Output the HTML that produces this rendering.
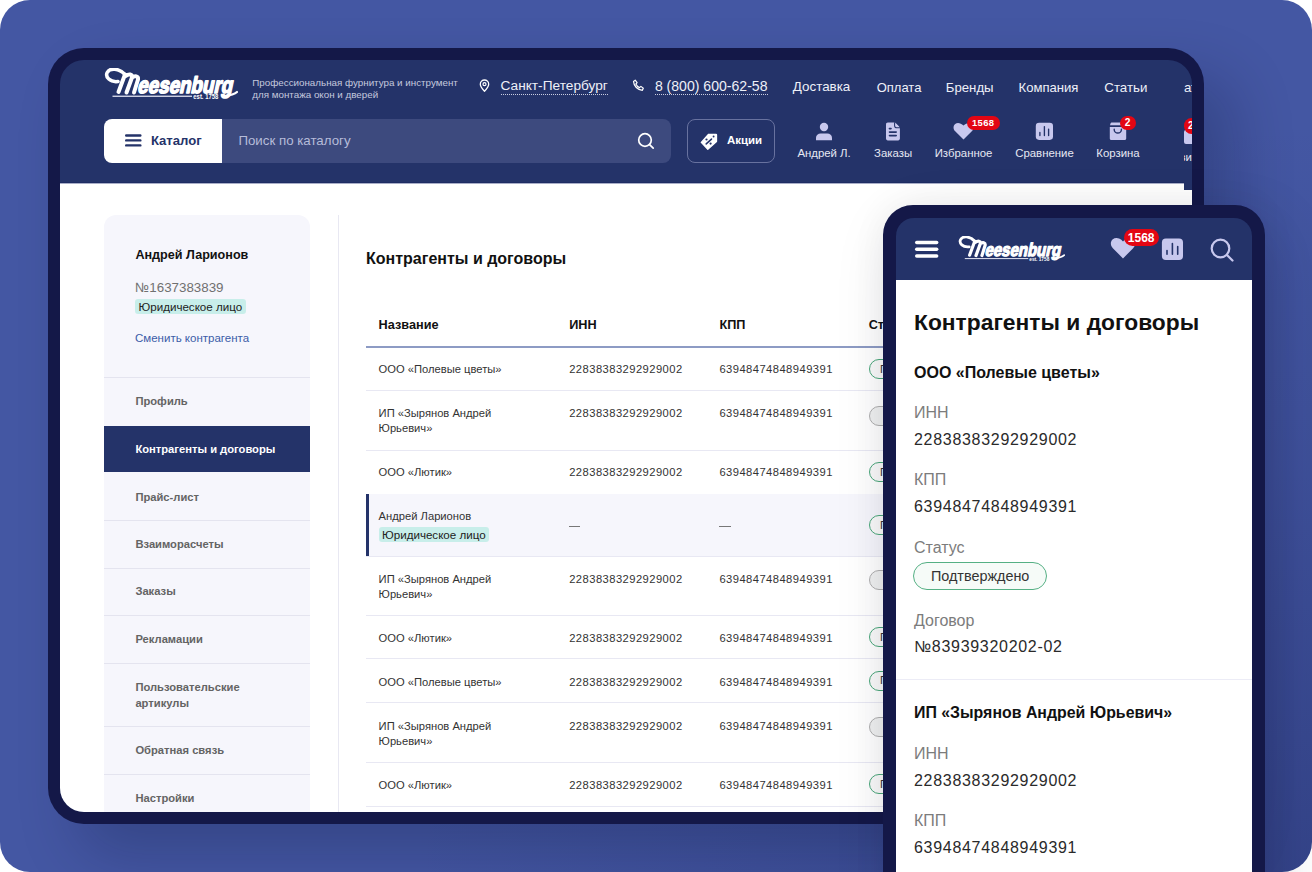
<!DOCTYPE html>
<html><head><meta charset="utf-8">
<style>
*{box-sizing:border-box;margin:0;padding:0}
html,body{width:1312px;height:872px;overflow:hidden;background:#fff;font-family:"Liberation Sans",sans-serif}
.abs{position:absolute}
.t{position:absolute;white-space:nowrap;line-height:1}
#bg{position:absolute;left:0;top:0;width:1312px;height:872px;border-radius:30px;background:radial-gradient(ellipse 900px 750px at 100% 100%,rgba(30,40,100,0.40) 0%,rgba(30,40,100,0.15) 55%,rgba(30,40,100,0) 100%),#4457a3}
#dframe{position:absolute;left:48px;top:48px;width:1156px;height:776px;border-radius:36px;background:#141848;box-shadow:30px 30px 60px rgba(5,10,40,0.22)}
#dclip{position:absolute;left:60px;top:60px;width:1132px;height:752px;border-radius:24px;overflow:hidden;background:#243369}
#dclip>.inner{position:absolute;left:-60px;top:-60px;width:1312px;height:872px}
#hclip{position:absolute;left:60px;top:60px;width:1124px;height:123px;overflow:hidden}
#hclip>.inner{position:absolute;left:-60px;top:-60px;width:1312px;height:872px}
#mframe{position:absolute;left:883px;top:205px;width:382px;height:720px;border-radius:30px;background:#141848;box-shadow:12px 20px 60px rgba(5,10,40,0.15),0 0 36px rgba(0,0,20,0.05)}
#mclip{position:absolute;left:896px;top:218px;width:356px;height:700px;border-radius:18px 18px 0 0;overflow:hidden;background:#243369}
#mclip>.inner{position:absolute;left:-896px;top:-218px;width:1312px;height:872px}
</style></head><body>
<div id="bg"></div>
<div id="dframe"></div>
<div id="dclip"><div class="inner">
<div class="abs" style="left:60px;top:183px;width:1124px;height:640px;background:#fff"></div><div class="abs" style="left:60px;top:182px;width:1124px;height:1px;background:#1e2d63"></div><div class="abs" style="left:60px;top:183px;width:1124px;height:1px;background:#a9aec8"></div><div class="abs" style="left:1184px;top:190px;width:8px;height:640px;background:#fff"></div>

<div class="abs" style="left:104px;top:215px;width:206.00px;height:615.00px;background:#f6f6fc;border-radius:12px 12px 0 0"></div>
<div class="t" style="left:135.40px;top:248.73px;font-size:12.6px;font-weight:700;color:#111;">Андрей Ларионов</div>
<div class="t" style="left:135.00px;top:280.70px;font-size:13.35px;font-weight:400;color:#707070;">№1637383839</div>
<div class="abs" style="left:135px;top:299.3px;width:110.80px;height:15.20px;background:#c8eeea;border-radius:3px"></div>
<div class="t" style="left:138.50px;top:301.08px;font-size:11.6px;font-weight:400;color:#222;">Юридическое лицо</div>
<div class="t" style="left:135.00px;top:332.97px;font-size:11.5px;font-weight:400;color:#3b5ca8;">Сменить контрагента</div>
<div class="abs" style="left:104px;top:377.0px;width:206.00px;height:1.00px;background:#e4e4ef"></div>
<div class="abs" style="left:104px;top:519.5px;width:206.00px;height:1.00px;background:#e4e4ef"></div>
<div class="abs" style="left:104px;top:568.0px;width:206.00px;height:1.00px;background:#e4e4ef"></div>
<div class="abs" style="left:104px;top:614.8px;width:206.00px;height:1.00px;background:#e4e4ef"></div>
<div class="abs" style="left:104px;top:662.7px;width:206.00px;height:1.00px;background:#e4e4ef"></div>
<div class="abs" style="left:104px;top:725.9px;width:206.00px;height:1.00px;background:#e4e4ef"></div>
<div class="abs" style="left:104px;top:773.5px;width:206.00px;height:1.00px;background:#e4e4ef"></div>
<div class="abs" style="left:104px;top:425.6px;width:206.00px;height:46.90px;background:#243369"></div>
<div class="t" style="left:135.40px;top:443.82px;font-size:11.2px;font-weight:700;color:#fff;">Контрагенты и договоры</div>
<div class="t" style="left:135.40px;top:396.32px;font-size:11.2px;font-weight:700;color:#646464;">Профиль</div>
<div class="t" style="left:135.40px;top:491.92px;font-size:11.2px;font-weight:700;color:#646464;">Прайс-лист</div>
<div class="t" style="left:135.40px;top:538.82px;font-size:11.2px;font-weight:700;color:#646464;">Взаиморасчеты</div>
<div class="t" style="left:135.40px;top:586.42px;font-size:11.2px;font-weight:700;color:#646464;">Заказы</div>
<div class="t" style="left:135.40px;top:633.92px;font-size:11.2px;font-weight:700;color:#646464;">Рекламации</div>
<div class="t" style="left:135.40px;top:681.82px;font-size:11.2px;font-weight:700;color:#646464;">Пользовательские</div>
<div class="t" style="left:135.40px;top:697.52px;font-size:11.2px;font-weight:700;color:#646464;">артикулы</div>
<div class="t" style="left:135.40px;top:745.02px;font-size:11.2px;font-weight:700;color:#646464;">Обратная связь</div>
<div class="t" style="left:135.40px;top:792.62px;font-size:11.2px;font-weight:700;color:#646464;">Настройки</div>
<div class="abs" style="left:338px;top:215px;width:1.00px;height:615.00px;background:#e8e8f2"></div>
<div class="t" style="left:366.00px;top:250.76px;font-size:16px;font-weight:700;color:#111;">Контрагенты и договоры</div>
<div class="t" style="left:378.60px;top:319.25px;font-size:12.7px;font-weight:700;color:#111;">Название</div>
<div class="t" style="left:569.20px;top:319.25px;font-size:12.7px;font-weight:700;color:#111;">ИНН</div>
<div class="t" style="left:719.40px;top:319.25px;font-size:12.7px;font-weight:700;color:#111;">КПП</div>
<div class="t" style="left:868.70px;top:319.25px;font-size:12.7px;font-weight:700;color:#111;">Статус</div>
<div class="abs" style="left:366px;top:346.3px;width:534.00px;height:1.50px;background:#8d9bc4"></div>
<div class="t" style="left:378.60px;top:364.12px;font-size:11.2px;font-weight:400;color:#333;">ООО «Полевые цветы»</div>
<div class="t" style="left:569.20px;top:364.12px;font-size:11.2px;font-weight:400;color:#333;letter-spacing:0.45px;">22838383292929002</div>
<div class="t" style="left:719.40px;top:364.12px;font-size:11.2px;font-weight:400;color:#333;letter-spacing:0.45px;">63948474848949391</div>
<div class="abs" style="left:366px;top:390.0px;width:534.00px;height:1.00px;background:#e8e8f3"></div>
<div class="abs" style="left:868.7px;top:359px;width:91.30px;height:20.00px;border:1px solid #4aa87a;border-radius:10px;background:#fafafa"></div>
<div class="t" style="left:880.00px;top:363.52px;font-size:11.2px;font-weight:400;color:#333;">Подтверждено</div>
<div class="t" style="left:378.60px;top:408.02px;font-size:11.2px;font-weight:400;color:#333;">ИП «Зырянов Андрей</div>
<div class="t" style="left:378.60px;top:423.12px;font-size:11.2px;font-weight:400;color:#333;">Юрьевич»</div>
<div class="t" style="left:569.20px;top:408.02px;font-size:11.2px;font-weight:400;color:#333;letter-spacing:0.45px;">22838383292929002</div>
<div class="t" style="left:719.40px;top:408.02px;font-size:11.2px;font-weight:400;color:#333;letter-spacing:0.45px;">63948474848949391</div>
<div class="abs" style="left:366px;top:450.2px;width:534.00px;height:1.00px;background:#e8e8f3"></div>
<div class="abs" style="left:868.7px;top:405.5px;width:91.30px;height:20.00px;border:1px solid #b0b0b0;border-radius:10px;background:#f0f1f1"></div>
<div class="t" style="left:378.60px;top:467.02px;font-size:11.2px;font-weight:400;color:#333;">ООО «Лютик»</div>
<div class="t" style="left:569.20px;top:467.02px;font-size:11.2px;font-weight:400;color:#333;letter-spacing:0.45px;">22838383292929002</div>
<div class="t" style="left:719.40px;top:467.02px;font-size:11.2px;font-weight:400;color:#333;letter-spacing:0.45px;">63948474848949391</div>
<div class="abs" style="left:366px;top:493.5px;width:534.00px;height:1.00px;background:#e8e8f3"></div>
<div class="abs" style="left:868.7px;top:462px;width:91.30px;height:20.00px;border:1px solid #4aa87a;border-radius:10px;background:#fafafa"></div>
<div class="t" style="left:880.00px;top:466.52px;font-size:11.2px;font-weight:400;color:#333;">Подтверждено</div>
<div class="abs" style="left:366px;top:494px;width:534.00px;height:62.00px;background:#f6f6fc"></div>
<div class="abs" style="left:366px;top:494px;width:3.00px;height:62.00px;background:#243369"></div>
<div class="t" style="left:378.60px;top:510.52px;font-size:11.2px;font-weight:400;color:#333;">Андрей Ларионов</div>
<div class="abs" style="left:378.5px;top:527.2px;width:110.30px;height:15.10px;background:#c8eeea;border-radius:3px"></div>
<div class="t" style="left:382.00px;top:528.98px;font-size:11.6px;font-weight:400;color:#222;">Юридическое лицо</div>
<div class="abs" style="left:569.2px;top:525.5px;width:11.30px;height:1.10px;background:#777"></div>
<div class="abs" style="left:719.4px;top:525.5px;width:11.30px;height:1.10px;background:#777"></div>
<div class="abs" style="left:366px;top:555.5px;width:534.00px;height:1.00px;background:#e8e8f3"></div>
<div class="abs" style="left:868.7px;top:515px;width:91.30px;height:20.00px;border:1px solid #4aa87a;border-radius:10px;background:#fafafa"></div>
<div class="t" style="left:880.00px;top:519.52px;font-size:11.2px;font-weight:400;color:#333;">Подтверждено</div>
<div class="t" style="left:378.60px;top:574.02px;font-size:11.2px;font-weight:400;color:#333;">ИП «Зырянов Андрей</div>
<div class="t" style="left:378.60px;top:589.22px;font-size:11.2px;font-weight:400;color:#333;">Юрьевич»</div>
<div class="t" style="left:569.20px;top:574.02px;font-size:11.2px;font-weight:400;color:#333;letter-spacing:0.45px;">22838383292929002</div>
<div class="t" style="left:719.40px;top:574.02px;font-size:11.2px;font-weight:400;color:#333;letter-spacing:0.45px;">63948474848949391</div>
<div class="abs" style="left:366px;top:614.8px;width:534.00px;height:1.00px;background:#e8e8f3"></div>
<div class="abs" style="left:868.7px;top:570px;width:91.30px;height:20.00px;border:1px solid #b0b0b0;border-radius:10px;background:#f0f1f1"></div>
<div class="t" style="left:378.60px;top:633.02px;font-size:11.2px;font-weight:400;color:#333;">ООО «Лютик»</div>
<div class="t" style="left:569.20px;top:633.02px;font-size:11.2px;font-weight:400;color:#333;letter-spacing:0.45px;">22838383292929002</div>
<div class="t" style="left:719.40px;top:633.02px;font-size:11.2px;font-weight:400;color:#333;letter-spacing:0.45px;">63948474848949391</div>
<div class="abs" style="left:366px;top:658.3px;width:534.00px;height:1.00px;background:#e8e8f3"></div>
<div class="abs" style="left:868.7px;top:627px;width:91.30px;height:20.00px;border:1px solid #4aa87a;border-radius:10px;background:#fafafa"></div>
<div class="t" style="left:880.00px;top:631.52px;font-size:11.2px;font-weight:400;color:#333;">Подтверждено</div>
<div class="t" style="left:378.60px;top:676.82px;font-size:11.2px;font-weight:400;color:#333;">ООО «Полевые цветы»</div>
<div class="t" style="left:569.20px;top:676.82px;font-size:11.2px;font-weight:400;color:#333;letter-spacing:0.45px;">22838383292929002</div>
<div class="t" style="left:719.40px;top:676.82px;font-size:11.2px;font-weight:400;color:#333;letter-spacing:0.45px;">63948474848949391</div>
<div class="abs" style="left:366px;top:702.4px;width:534.00px;height:1.00px;background:#e8e8f3"></div>
<div class="abs" style="left:868.7px;top:670.5px;width:91.30px;height:20.00px;border:1px solid #4aa87a;border-radius:10px;background:#fafafa"></div>
<div class="t" style="left:880.00px;top:675.02px;font-size:11.2px;font-weight:400;color:#333;">Подтверждено</div>
<div class="t" style="left:378.60px;top:720.52px;font-size:11.2px;font-weight:400;color:#333;">ИП «Зырянов Андрей</div>
<div class="t" style="left:378.60px;top:735.82px;font-size:11.2px;font-weight:400;color:#333;">Юрьевич»</div>
<div class="t" style="left:569.20px;top:720.52px;font-size:11.2px;font-weight:400;color:#333;letter-spacing:0.45px;">22838383292929002</div>
<div class="t" style="left:719.40px;top:720.52px;font-size:11.2px;font-weight:400;color:#333;letter-spacing:0.45px;">63948474848949391</div>
<div class="abs" style="left:366px;top:761.7px;width:534.00px;height:1.00px;background:#e8e8f3"></div>
<div class="abs" style="left:868.7px;top:717px;width:91.30px;height:20.00px;border:1px solid #b0b0b0;border-radius:10px;background:#f0f1f1"></div>
<div class="t" style="left:378.60px;top:779.82px;font-size:11.2px;font-weight:400;color:#333;">ООО «Лютик»</div>
<div class="t" style="left:569.20px;top:779.82px;font-size:11.2px;font-weight:400;color:#333;letter-spacing:0.45px;">22838383292929002</div>
<div class="t" style="left:719.40px;top:779.82px;font-size:11.2px;font-weight:400;color:#333;letter-spacing:0.45px;">63948474848949391</div>
<div class="abs" style="left:366px;top:805.5px;width:534.00px;height:1.00px;background:#e8e8f3"></div>
<div class="abs" style="left:868.7px;top:774px;width:91.30px;height:20.00px;border:1px solid #4aa87a;border-radius:10px;background:#fafafa"></div>
<div class="t" style="left:880.00px;top:778.52px;font-size:11.2px;font-weight:400;color:#333;">Подтверждено</div>

</div></div>
<div id="hclip"><div class="inner">
<svg class="abs" style="left:104px;top:68px" width="134" height="32" viewBox="0 0 134 32">
<g fill="none" stroke="#fff" stroke-linecap="round" stroke-linejoin="round">
<path d="M14 13.5C6 14.5 1 9 3.2 4.5 5.8-0.5 15 0 21 6.5" stroke-width="3.5"/>
<path d="M21 6.5L14.5 24M21.5 8C25 5.5 28.5 6 28 9.5L22.5 24.5M28 9.5C31 7.5 34.5 8 34 11.5L30 24.5" stroke-width="4"/>
</g>
<g transform="translate(0,25) skewX(-12) translate(0,-25)"><text x="33" y="24.7" font-family="Liberation Sans" font-weight="700" font-size="23" fill="#fff" stroke="#fff" stroke-width="1.6" stroke-linejoin="round" textLength="95" lengthAdjust="spacingAndGlyphs">eesenburg</text></g>
<path d="M120 28C126 27.5 131 26 133 24" fill="none" stroke="#fff" stroke-width="2.2" stroke-linecap="round"/>
<rect x="8.5" y="27.6" width="79.5" height="1.3" fill="#dfe2f0"/>
<text x="89.3" y="31.3" font-family="Liberation Sans" font-weight="700" font-size="6.3" fill="#fff" textLength="25" lengthAdjust="spacingAndGlyphs">est. 1758</text>
</svg>
<div class="t" style="left:252.30px;top:78.00px;font-size:9.8px;font-weight:400;color:#c5c9de;">Профессиональная фурнитура и инструмент</div>
<div class="t" style="left:252.30px;top:90.40px;font-size:9.8px;font-weight:400;color:#c5c9de;">для монтажа окон и дверей</div>
<svg class="abs" style="left:478px;top:79px" width="13" height="13" viewBox="0 0 13 13"><path d="M6.5 12.2C4.2 9.8 2.3 7.6 2.3 5.2a4.2 4.2 0 0 1 8.4 0c0 2.4-1.9 4.6-4.2 7z" fill="none" stroke="#fff" stroke-width="1.3"/><circle cx="6.5" cy="5.2" r="1.5" fill="none" stroke="#fff" stroke-width="1.2"/></svg>
<div class="t" style="left:500.50px;top:79.00px;font-size:13.7px;font-weight:400;color:#eef0f8;">Санкт-Петербург</div>
<div class="abs" style="left:500.5px;top:93.5px;width:107.30px;height:1.00px;background-image:linear-gradient(90deg,#c9cde0 50%,transparent 50%);background-size:2px 1px"></div>
<svg class="abs" style="left:632px;top:79px" width="14" height="13" viewBox="0 0 14 13"><path d="M3.2 1.2l1.9 2.4-1.2 1.4c.7 1.6 2 2.9 3.6 3.6l1.4-1.2 2.4 1.9-.9 2c-4.8-.3-8.6-4.1-8.9-8.9z" fill="none" stroke="#fff" stroke-width="1.2" stroke-linejoin="round"/></svg>
<div class="t" style="left:654.90px;top:78.69px;font-size:14.07px;font-weight:400;color:#eef0f8;">8 (800) 600-62-58</div>
<div class="abs" style="left:654.9px;top:93.5px;width:112.70px;height:1.00px;background-image:linear-gradient(90deg,#c9cde0 50%,transparent 50%);background-size:2px 1px"></div>
<div class="t" style="left:792.80px;top:80.46px;font-size:13.4px;font-weight:400;color:#eef0f8;">Доставка</div>
<div class="t" style="left:876.70px;top:80.80px;font-size:13.0px;font-weight:400;color:#eef0f8;">Оплата</div>
<div class="t" style="left:945.80px;top:80.63px;font-size:13.2px;font-weight:400;color:#eef0f8;">Бренды</div>
<div class="t" style="left:1018.50px;top:80.71px;font-size:13.1px;font-weight:400;color:#eef0f8;">Компания</div>
<div class="t" style="left:1104.30px;top:80.54px;font-size:13.3px;font-weight:400;color:#eef0f8;">Статьи</div>
<div class="t" style="left:1184.00px;top:80.54px;font-size:13.3px;font-weight:400;color:#eef0f8;">ат</div>
<div class="abs" style="left:104px;top:119px;width:118.00px;height:43.50px;background:#fff;border-radius:8px 0 0 8px"></div>
<svg class="abs" style="left:124px;top:133px" width="18" height="14" viewBox="0 0 18 14"><rect x="1" y="1.3" width="16.5" height="2.4" rx="1.2" fill="#243369"/><rect x="1" y="6.2" width="16.5" height="2.4" rx="1.2" fill="#243369"/><rect x="1" y="11.2" width="16.5" height="2.4" rx="1.2" fill="#243369"/></svg>
<div class="t" style="left:150.90px;top:134.11px;font-size:13.1px;font-weight:700;color:#243369;">Каталог</div>
<div class="abs" style="left:222px;top:119px;width:449.00px;height:43.50px;background:#3d4a7e;border-radius:0 8px 8px 0"></div>
<div class="t" style="left:238.40px;top:134.34px;font-size:13.3px;font-weight:400;color:#b6bcd9;">Поиск по каталогу</div>
<svg class="abs" style="left:637px;top:132px" width="18" height="18" viewBox="0 0 18 18"><circle cx="8" cy="8" r="6.3" fill="none" stroke="#fff" stroke-width="1.7"/><path d="M12.6 12.6l3.6 3.6" stroke="#fff" stroke-width="1.7" stroke-linecap="round"/></svg>
<div class="abs" style="left:687px;top:119px;width:88.00px;height:43.70px;border:1px solid #68729f;border-radius:8px"></div>
<svg class="abs" style="left:700px;top:132.6px" width="18" height="17" viewBox="0 0 18 17"><path d="M1.3 9.4L8.6 1.3h7.4c.3 0 .5.2.5.5v6.6L7.8 16.2z" fill="#fff" stroke="#fff" stroke-width="1.3" stroke-linejoin="round"/><circle cx="13.6" cy="3.5" r="0.95" fill="#243369"/><path d="M6.2 10.9l5.3-4.8" stroke="#243369" stroke-width="1.5" stroke-linecap="round"/><circle cx="6.5" cy="6.5" r="1.1" fill="#243369"/><circle cx="10.6" cy="10.6" r="1.1" fill="#243369"/></svg>
<div class="t" style="left:727.00px;top:135.06px;font-size:11.45px;font-weight:700;color:#fff;">Акции</div>
<svg class="abs" style="left:815px;top:122px" width="18" height="19" viewBox="0 0 18 19"><circle cx="9" cy="5" r="4.2" fill="#c8c8ee"/><path d="M1 18.2v-2.4c0-2.6 2.1-4.4 4.7-4.4h6.6c2.6 0 4.7 1.8 4.7 4.4v2.4z" fill="#c8c8ee"/></svg>
<div class="t" style="left:797.40px;top:148.35px;font-size:11.4px;font-weight:400;color:#e6e8f3;">Андрей Л.</div>
<svg class="abs" style="left:885px;top:122px" width="16" height="19" viewBox="0 0 16 19"><path d="M1 2.3C1 1.2 1.8 0.5 2.8 0.5h7.2l4.9 4.9v11.2c0 1-.8 1.8-1.8 1.8H2.8c-1 0-1.8-.8-1.8-1.8z" fill="#c8c8ee"/><path d="M9.6 0.2v3.2c0 1.4 1 2.4 2.4 2.4h3.2" fill="none" stroke="#243369" stroke-width="1.1"/><path d="M10.7 1.2l3.6 3.6h-2.3c-.8 0-1.3-.5-1.3-1.3z" fill="#c8c8ee"/><rect x="3.6" y="5.8" width="3.2" height="1.6" rx="0.8" fill="#243369"/><rect x="3.7" y="9.2" width="8.3" height="1.7" rx="0.8" fill="#243369"/><rect x="3.7" y="12.7" width="8.3" height="1.7" rx="0.8" fill="#243369"/></svg>
<div class="t" style="left:874.00px;top:148.15px;font-size:11.4px;font-weight:400;color:#e6e8f3;">Заказы</div>
<svg class="abs" style="left:953.3px;top:121.5px" width="21" height="18" viewBox="0 0 21 18"><path d="M10.5 17.5L2.2 9.2C0 7 0 3.6 2.2 1.9 4.3.2 7.6.6 10.5 3.6 13.4.6 16.7.2 18.8 1.9c2.2 1.7 2.2 5.1 0 7.3z" fill="#c8c8ee"/></svg>
<div class="abs" style="left:967px;top:115.8px;width:33.00px;height:14.00px;background:#e30613;border-radius:7px"></div>
<div class="t" style="left:972.00px;top:118.04px;font-size:9.4px;font-weight:700;color:#fff;letter-spacing:0.35px;">1568</div>
<div class="t" style="left:934.70px;top:148.15px;font-size:11.4px;font-weight:400;color:#e6e8f3;">Избранное</div>
<svg class="abs" style="left:1035px;top:122px" width="19" height="19" viewBox="0 0 19 19"><rect x="0.8" y="0.7" width="17.2" height="17.2" rx="3.3" fill="#c8c8ee"/><path d="M4.9 10.4v3.2M9.4 4.6v9M13.6 7.1v6.5" stroke="#243369" stroke-width="1.35" stroke-linecap="round"/></svg>
<div class="t" style="left:1015.20px;top:148.15px;font-size:11.4px;font-weight:400;color:#e6e8f3;">Сравнение</div>
<svg class="abs" style="left:1109px;top:122px" width="18" height="19" viewBox="0 0 18 19"><path d="M0.8 4.9h16.4v11.5c0 .9-.7 1.5-1.5 1.5H2.3c-.9 0-1.5-.7-1.5-1.5z" fill="#c8c8ee"/><path d="M2.8 0.5h12.4c.6 0 1 .4 1.2.9l.5 1.8H1l.5-1.8c.2-.5.6-.9 1.2-.9z" fill="#c8c8ee"/><path d="M5.2 7.2v.2a3.6 3.6 0 0 0 7.2 0v-.2" fill="none" stroke="#243369" stroke-width="1.4" stroke-linecap="round"/></svg>
<div class="abs" style="left:1120px;top:115.6px;width:16.00px;height:14.60px;background:#e30613;border-radius:8px"></div>
<div class="t" style="left:1124.80px;top:117.97px;font-size:10.2px;font-weight:700;color:#fff;">2</div>
<div class="t" style="left:1096.30px;top:148.15px;font-size:11.4px;font-weight:400;color:#e6e8f3;">Корзина</div>

</div></div>
<div class="abs" style="left:1184px;top:60px;width:8px;height:130px;overflow:hidden"><div class="abs" style="left:-1184px;top:-60px;width:1312px;height:872px">
<svg class="abs" style="left:104px;top:68px" width="134" height="32" viewBox="0 0 134 32">
<g fill="none" stroke="#fff" stroke-linecap="round" stroke-linejoin="round">
<path d="M14 13.5C6 14.5 1 9 3.2 4.5 5.8-0.5 15 0 21 6.5" stroke-width="3.5"/>
<path d="M21 6.5L14.5 24M21.5 8C25 5.5 28.5 6 28 9.5L22.5 24.5M28 9.5C31 7.5 34.5 8 34 11.5L30 24.5" stroke-width="4"/>
</g>
<g transform="translate(0,25) skewX(-12) translate(0,-25)"><text x="33" y="24.7" font-family="Liberation Sans" font-weight="700" font-size="23" fill="#fff" stroke="#fff" stroke-width="1.6" stroke-linejoin="round" textLength="95" lengthAdjust="spacingAndGlyphs">eesenburg</text></g>
<path d="M120 28C126 27.5 131 26 133 24" fill="none" stroke="#fff" stroke-width="2.2" stroke-linecap="round"/>
<rect x="8.5" y="27.6" width="79.5" height="1.3" fill="#dfe2f0"/>
<text x="89.3" y="31.3" font-family="Liberation Sans" font-weight="700" font-size="6.3" fill="#fff" textLength="25" lengthAdjust="spacingAndGlyphs">est. 1758</text>
</svg>
<div class="t" style="left:252.30px;top:78.00px;font-size:9.8px;font-weight:400;color:#c5c9de;">Профессиональная фурнитура и инструмент</div>
<div class="t" style="left:252.30px;top:90.40px;font-size:9.8px;font-weight:400;color:#c5c9de;">для монтажа окон и дверей</div>
<svg class="abs" style="left:478px;top:79px" width="13" height="13" viewBox="0 0 13 13"><path d="M6.5 12.2C4.2 9.8 2.3 7.6 2.3 5.2a4.2 4.2 0 0 1 8.4 0c0 2.4-1.9 4.6-4.2 7z" fill="none" stroke="#fff" stroke-width="1.3"/><circle cx="6.5" cy="5.2" r="1.5" fill="none" stroke="#fff" stroke-width="1.2"/></svg>
<div class="t" style="left:500.50px;top:79.00px;font-size:13.7px;font-weight:400;color:#eef0f8;">Санкт-Петербург</div>
<div class="abs" style="left:500.5px;top:93.5px;width:107.30px;height:1.00px;background-image:linear-gradient(90deg,#c9cde0 50%,transparent 50%);background-size:2px 1px"></div>
<svg class="abs" style="left:632px;top:79px" width="14" height="13" viewBox="0 0 14 13"><path d="M3.2 1.2l1.9 2.4-1.2 1.4c.7 1.6 2 2.9 3.6 3.6l1.4-1.2 2.4 1.9-.9 2c-4.8-.3-8.6-4.1-8.9-8.9z" fill="none" stroke="#fff" stroke-width="1.2" stroke-linejoin="round"/></svg>
<div class="t" style="left:654.90px;top:78.69px;font-size:14.07px;font-weight:400;color:#eef0f8;">8 (800) 600-62-58</div>
<div class="abs" style="left:654.9px;top:93.5px;width:112.70px;height:1.00px;background-image:linear-gradient(90deg,#c9cde0 50%,transparent 50%);background-size:2px 1px"></div>
<div class="t" style="left:792.80px;top:80.46px;font-size:13.4px;font-weight:400;color:#eef0f8;">Доставка</div>
<div class="t" style="left:876.70px;top:80.80px;font-size:13.0px;font-weight:400;color:#eef0f8;">Оплата</div>
<div class="t" style="left:945.80px;top:80.63px;font-size:13.2px;font-weight:400;color:#eef0f8;">Бренды</div>
<div class="t" style="left:1018.50px;top:80.71px;font-size:13.1px;font-weight:400;color:#eef0f8;">Компания</div>
<div class="t" style="left:1104.30px;top:80.54px;font-size:13.3px;font-weight:400;color:#eef0f8;">Статьи</div>
<div class="t" style="left:1184.00px;top:80.54px;font-size:13.3px;font-weight:400;color:#eef0f8;">ат</div>
<div class="abs" style="left:104px;top:119px;width:118.00px;height:43.50px;background:#fff;border-radius:8px 0 0 8px"></div>
<svg class="abs" style="left:124px;top:133px" width="18" height="14" viewBox="0 0 18 14"><rect x="1" y="1.3" width="16.5" height="2.4" rx="1.2" fill="#243369"/><rect x="1" y="6.2" width="16.5" height="2.4" rx="1.2" fill="#243369"/><rect x="1" y="11.2" width="16.5" height="2.4" rx="1.2" fill="#243369"/></svg>
<div class="t" style="left:150.90px;top:134.11px;font-size:13.1px;font-weight:700;color:#243369;">Каталог</div>
<div class="abs" style="left:222px;top:119px;width:449.00px;height:43.50px;background:#3d4a7e;border-radius:0 8px 8px 0"></div>
<div class="t" style="left:238.40px;top:134.34px;font-size:13.3px;font-weight:400;color:#b6bcd9;">Поиск по каталогу</div>
<svg class="abs" style="left:637px;top:132px" width="18" height="18" viewBox="0 0 18 18"><circle cx="8" cy="8" r="6.3" fill="none" stroke="#fff" stroke-width="1.7"/><path d="M12.6 12.6l3.6 3.6" stroke="#fff" stroke-width="1.7" stroke-linecap="round"/></svg>
<div class="abs" style="left:687px;top:119px;width:88.00px;height:43.70px;border:1px solid #68729f;border-radius:8px"></div>
<svg class="abs" style="left:700px;top:132.6px" width="18" height="17" viewBox="0 0 18 17"><path d="M1.3 9.4L8.6 1.3h7.4c.3 0 .5.2.5.5v6.6L7.8 16.2z" fill="#fff" stroke="#fff" stroke-width="1.3" stroke-linejoin="round"/><circle cx="13.6" cy="3.5" r="0.95" fill="#243369"/><path d="M6.2 10.9l5.3-4.8" stroke="#243369" stroke-width="1.5" stroke-linecap="round"/><circle cx="6.5" cy="6.5" r="1.1" fill="#243369"/><circle cx="10.6" cy="10.6" r="1.1" fill="#243369"/></svg>
<div class="t" style="left:727.00px;top:135.06px;font-size:11.45px;font-weight:700;color:#fff;">Акции</div>
<svg class="abs" style="left:815px;top:122px" width="18" height="19" viewBox="0 0 18 19"><circle cx="9" cy="5" r="4.2" fill="#c8c8ee"/><path d="M1 18.2v-2.4c0-2.6 2.1-4.4 4.7-4.4h6.6c2.6 0 4.7 1.8 4.7 4.4v2.4z" fill="#c8c8ee"/></svg>
<div class="t" style="left:797.40px;top:148.35px;font-size:11.4px;font-weight:400;color:#e6e8f3;">Андрей Л.</div>
<svg class="abs" style="left:885px;top:122px" width="16" height="19" viewBox="0 0 16 19"><path d="M1 2.3C1 1.2 1.8 0.5 2.8 0.5h7.2l4.9 4.9v11.2c0 1-.8 1.8-1.8 1.8H2.8c-1 0-1.8-.8-1.8-1.8z" fill="#c8c8ee"/><path d="M9.6 0.2v3.2c0 1.4 1 2.4 2.4 2.4h3.2" fill="none" stroke="#243369" stroke-width="1.1"/><path d="M10.7 1.2l3.6 3.6h-2.3c-.8 0-1.3-.5-1.3-1.3z" fill="#c8c8ee"/><rect x="3.6" y="5.8" width="3.2" height="1.6" rx="0.8" fill="#243369"/><rect x="3.7" y="9.2" width="8.3" height="1.7" rx="0.8" fill="#243369"/><rect x="3.7" y="12.7" width="8.3" height="1.7" rx="0.8" fill="#243369"/></svg>
<div class="t" style="left:874.00px;top:148.15px;font-size:11.4px;font-weight:400;color:#e6e8f3;">Заказы</div>
<svg class="abs" style="left:953.3px;top:121.5px" width="21" height="18" viewBox="0 0 21 18"><path d="M10.5 17.5L2.2 9.2C0 7 0 3.6 2.2 1.9 4.3.2 7.6.6 10.5 3.6 13.4.6 16.7.2 18.8 1.9c2.2 1.7 2.2 5.1 0 7.3z" fill="#c8c8ee"/></svg>
<div class="abs" style="left:967px;top:115.8px;width:33.00px;height:14.00px;background:#e30613;border-radius:7px"></div>
<div class="t" style="left:972.00px;top:118.04px;font-size:9.4px;font-weight:700;color:#fff;letter-spacing:0.35px;">1568</div>
<div class="t" style="left:934.70px;top:148.15px;font-size:11.4px;font-weight:400;color:#e6e8f3;">Избранное</div>
<svg class="abs" style="left:1035px;top:122px" width="19" height="19" viewBox="0 0 19 19"><rect x="0.8" y="0.7" width="17.2" height="17.2" rx="3.3" fill="#c8c8ee"/><path d="M4.9 10.4v3.2M9.4 4.6v9M13.6 7.1v6.5" stroke="#243369" stroke-width="1.35" stroke-linecap="round"/></svg>
<div class="t" style="left:1015.20px;top:148.15px;font-size:11.4px;font-weight:400;color:#e6e8f3;">Сравнение</div>
<svg class="abs" style="left:1109px;top:122px" width="18" height="19" viewBox="0 0 18 19"><path d="M0.8 4.9h16.4v11.5c0 .9-.7 1.5-1.5 1.5H2.3c-.9 0-1.5-.7-1.5-1.5z" fill="#c8c8ee"/><path d="M2.8 0.5h12.4c.6 0 1 .4 1.2.9l.5 1.8H1l.5-1.8c.2-.5.6-.9 1.2-.9z" fill="#c8c8ee"/><path d="M5.2 7.2v.2a3.6 3.6 0 0 0 7.2 0v-.2" fill="none" stroke="#243369" stroke-width="1.4" stroke-linecap="round"/></svg>
<div class="abs" style="left:1120px;top:115.6px;width:16.00px;height:14.60px;background:#e30613;border-radius:8px"></div>
<div class="t" style="left:1124.80px;top:117.97px;font-size:10.2px;font-weight:700;color:#fff;">2</div>
<div class="t" style="left:1096.30px;top:148.15px;font-size:11.4px;font-weight:400;color:#e6e8f3;">Корзина</div>
<div class="abs" style="left:1184px;top:130px;width:16.00px;height:14.00px;background:#c8c8ee;border-radius:2px"></div>
<div class="abs" style="left:1183.5px;top:118px;width:15.50px;height:15.50px;background:#e30613;border-radius:8px"></div>
<div class="t" style="left:1188.00px;top:120.57px;font-size:10.2px;font-weight:700;color:#fff;">2</div>
<div class="t" style="left:1180.20px;top:151.85px;font-size:11.4px;font-weight:400;color:#e6e8f3;">зи</div>

</div></div>
<div id="mframe"></div>
<div id="mclip"><div class="inner">
<div class="abs" style="left:896px;top:280px;width:356px;height:600px;background:#fff"></div>
<svg class="abs" style="left:914px;top:240px" width="26" height="19" viewBox="0 0 26 19"><rect x="1" y="0.8" width="23.4" height="3.4" rx="1.7" fill="#fff"/><rect x="1" y="7.6" width="23.4" height="3.4" rx="1.7" fill="#fff"/><rect x="1" y="14.3" width="23.4" height="3.4" rx="1.7" fill="#fff"/></svg>
<svg class="abs" style="left:957.5px;top:235.5px" width="107" height="25.6" viewBox="0 0 134 32">
<g fill="none" stroke="#fff" stroke-linecap="round" stroke-linejoin="round">
<path d="M14 13.5C6 14.5 1 9 3.2 4.5 5.8-0.5 15 0 21 6.5" stroke-width="3.5"/>
<path d="M21 6.5L14.5 24M21.5 8C25 5.5 28.5 6 28 9.5L22.5 24.5M28 9.5C31 7.5 34.5 8 34 11.5L30 24.5" stroke-width="4"/>
</g>
<g transform="translate(0,25) skewX(-12) translate(0,-25)"><text x="33" y="24.7" font-family="Liberation Sans" font-weight="700" font-size="23" fill="#fff" stroke="#fff" stroke-width="1.6" stroke-linejoin="round" textLength="95" lengthAdjust="spacingAndGlyphs">eesenburg</text></g>
<path d="M120 28C126 27.5 131 26 133 24" fill="none" stroke="#fff" stroke-width="2.2" stroke-linecap="round"/>
<rect x="8.5" y="27.6" width="79.5" height="1.3" fill="#dfe2f0"/>
<text x="89.3" y="31.3" font-family="Liberation Sans" font-weight="700" font-size="6.3" fill="#fff" textLength="25" lengthAdjust="spacingAndGlyphs">est. 1758</text>
</svg>
<svg class="abs" style="left:1110px;top:237px" width="26" height="22" viewBox="0 0 21 18"><path d="M10.5 17.5L2.2 9.2C0 7 0 3.6 2.2 1.9 4.3.2 7.6.6 10.5 3.6 13.4.6 16.7.2 18.8 1.9c2.2 1.7 2.2 5.1 0 7.3z" fill="#c8c8ee"/></svg>
<div class="abs" style="left:1124px;top:229px;width:35.00px;height:17.00px;background:#e30613;border-radius:8.5px"></div>
<div class="t" style="left:1127.80px;top:231.84px;font-size:12px;font-weight:700;color:#fff;">1568</div>
<svg class="abs" style="left:1161px;top:238px" width="23" height="23" viewBox="0 0 23 23"><rect x="0.9" y="0.5" width="21.1" height="21.4" rx="4" fill="#c8c8ee"/><path d="M6 12.6v3.7M11.4 5.6v10.7M16.7 8.6v7.7" stroke="#243369" stroke-width="1.6" stroke-linecap="round"/></svg>
<svg class="abs" style="left:1209px;top:236.8px" width="26" height="26" viewBox="0 0 26 26"><circle cx="11.5" cy="11.5" r="8.8" fill="none" stroke="#c8c8ee" stroke-width="2.2"/><path d="M18 18l5.5 5.5" stroke="#c8c8ee" stroke-width="2.2" stroke-linecap="round"/></svg>
<div class="t" style="left:914.00px;top:310.60px;font-size:22.8px;font-weight:700;color:#111;">Контрагенты и договоры</div>
<div class="t" style="left:914.00px;top:364.56px;font-size:16px;font-weight:700;color:#111;">ООО «Полевые цветы»</div>
<div class="t" style="left:914.00px;top:404.66px;font-size:16px;font-weight:400;color:#7c7c7c;">ИНН</div>
<div class="t" style="left:914.00px;top:432.46px;font-size:16px;font-weight:400;color:#2a2a2a;letter-spacing:0.7px;">22838383292929002</div>
<div class="t" style="left:914.00px;top:472.46px;font-size:16px;font-weight:400;color:#7c7c7c;">КПП</div>
<div class="t" style="left:914.00px;top:499.46px;font-size:16px;font-weight:400;color:#2a2a2a;letter-spacing:0.7px;">63948474848949391</div>
<div class="t" style="left:914.00px;top:539.86px;font-size:16px;font-weight:400;color:#7c7c7c;">Статус</div>
<div class="abs" style="left:913px;top:562.3px;width:134.00px;height:27.40px;border:1px solid #55b084;border-radius:14px;background:#f6fbf8"></div>
<div class="t" style="left:930.90px;top:569.31px;font-size:14.4px;font-weight:400;color:#333;">Подтверждено</div>
<div class="t" style="left:914.00px;top:612.96px;font-size:16px;font-weight:400;color:#7c7c7c;">Договор</div>
<div class="t" style="left:914.00px;top:638.96px;font-size:16px;font-weight:400;color:#2a2a2a;letter-spacing:0.7px;">№83939320202-02</div>
<div class="abs" style="left:896px;top:678.5px;width:356.00px;height:1.50px;background:#ececf6"></div>
<div class="t" style="left:914.00px;top:705.34px;font-size:15.9px;font-weight:700;color:#111;">ИП «Зырянов Андрей Юрьевич»</div>
<div class="t" style="left:914.00px;top:746.26px;font-size:16px;font-weight:400;color:#7c7c7c;">ИНН</div>
<div class="t" style="left:914.00px;top:772.76px;font-size:16px;font-weight:400;color:#2a2a2a;letter-spacing:0.7px;">22838383292929002</div>
<div class="t" style="left:914.00px;top:813.06px;font-size:16px;font-weight:400;color:#7c7c7c;">КПП</div>
<div class="t" style="left:914.00px;top:839.86px;font-size:16px;font-weight:400;color:#2a2a2a;letter-spacing:0.7px;">63948474848949391</div>

</div></div>
</body></html>
